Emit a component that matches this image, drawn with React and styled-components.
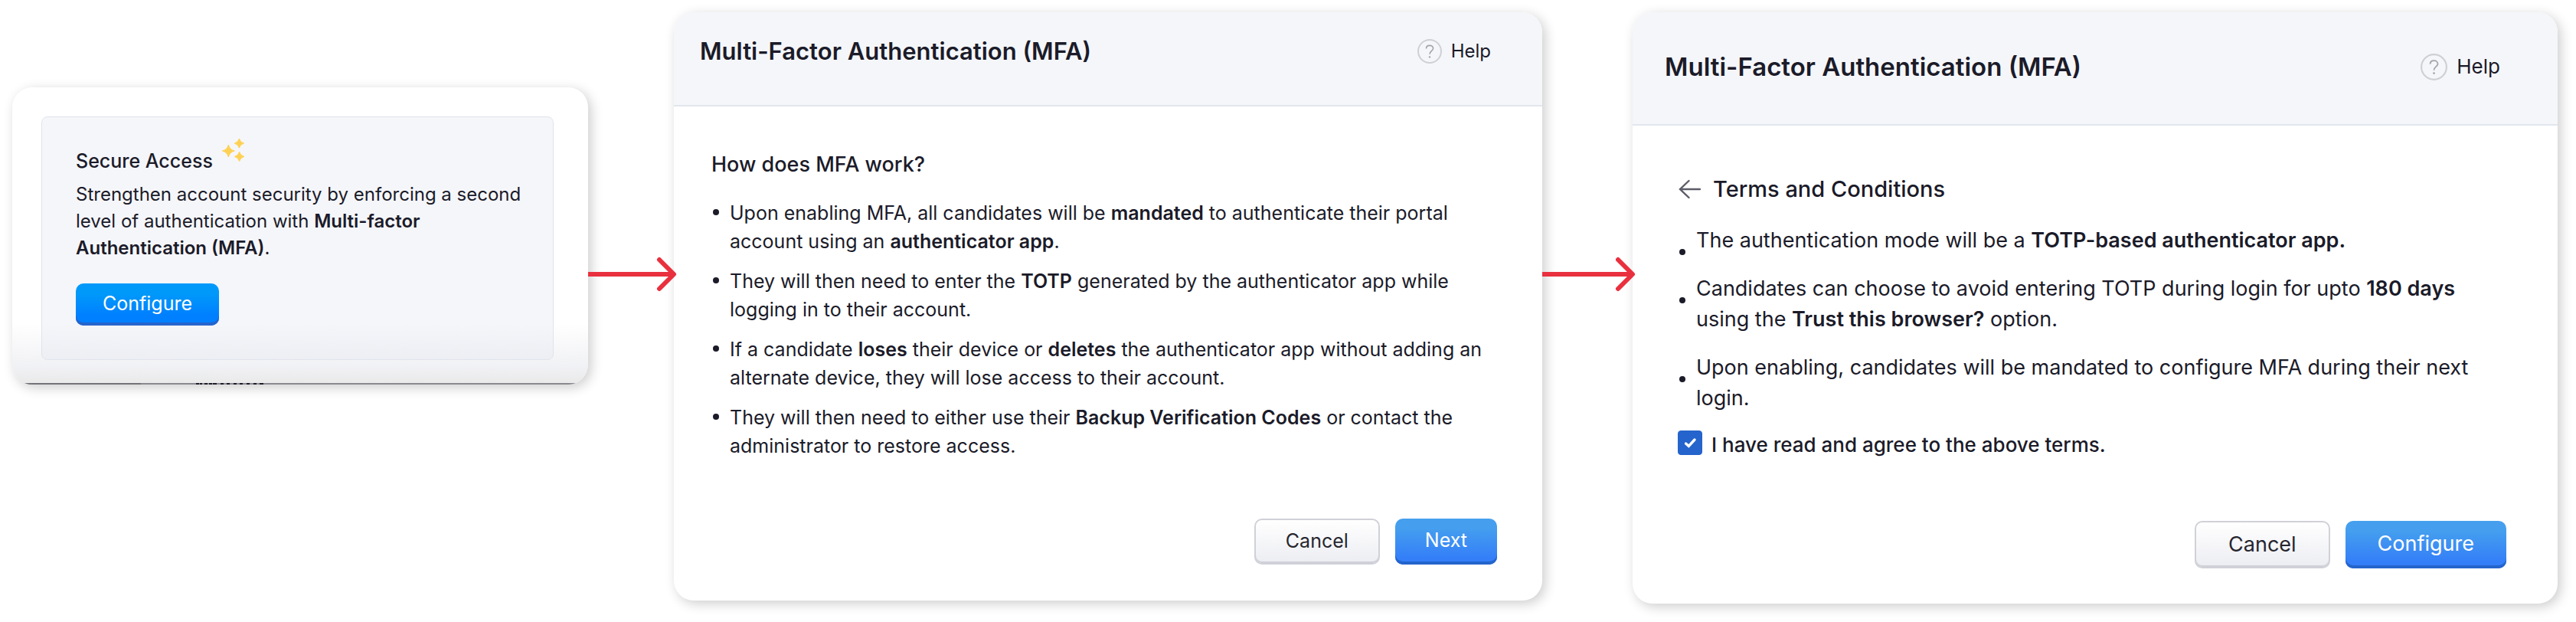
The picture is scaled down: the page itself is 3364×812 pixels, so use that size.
import React, { useState } from 'react';
import styled, { createGlobalStyle } from 'styled-components';

const GlobalStyle = createGlobalStyle`
	* {
		box-sizing: border-box;
	}
	body {
		margin: 0;
		background: #fff;
		color: #1b1b29;
		font-family: Inter, "Liberation Sans", sans-serif;
	}
	button, input {
		font-family: inherit;
	}
`;

const Flow = styled.main`
	display: grid;
	grid-template-columns: 752fr 112px 1134fr 118px 1208fr;
	align-items: start;
	padding: 16px 24px 24px 16px;
`;

const Panel = styled.section`
	border-radius: 26px;
	background: #fff;
	box-shadow: 4px 4px 16px rgba(0, 0, 0, 0.2);
	overflow: hidden;
`;

const IntroPanel = styled(Panel)`
	display: grid;
	margin-top: 98px;
`;

const IntroBody = styled.div`
	grid-area: 1 / 1;
	padding: 38px 45px 32px 38px;
`;

const IntroFade = styled.div`
	grid-area: 1 / 1;
	align-self: end;
	height: 80px;
	background: linear-gradient(rgba(255, 255, 255, 0), rgba(226, 228, 234, 0.5) 70%, #e9e9e9);
	pointer-events: none;
	svg {
		display: block;
		width: 100%;
	}
`;

const IntroCard = styled.div`
	padding: 28px 30px 44px 44px;
	border: 1px solid #dfe3eb;
	border-radius: 8px;
	background: #f5f6fa;
`;

const IntroHead = styled.div`
	display: flex;
	align-items: flex-end;
	gap: 12px;
	height: 46px;
	svg {
		align-self: flex-start;
	}
`;

const IntroTitle = styled.h2`
	margin: 0;
	font-size: 25px;
	line-height: 34px;
	font-weight: 500;
`;

const IntroText = styled.p`
	margin: 9px 0 29px;
	font-size: 24px;
	line-height: 35px;
	b {
		font-weight: 600;
	}
`;

const Header = styled.header`
	display: flex;
	align-items: center;
	justify-content: space-between;
	padding: ${(props) => (props.$large ? '49px 75px 53px 42px' : '31px 67px 50px 34px')};
	border-bottom: 2px solid #e1e6ee;
	background: #f5f6fa;
`;

const Title = styled.h1`
	margin: 0;
	font-size: ${(props) => (props.$large ? 33 : 31)}px;
	line-height: ${(props) => (props.$large ? 44 : 40)}px;
	font-weight: 600;
`;

const HelpLink = styled.a`
	display: flex;
	align-items: center;
	gap: 12px;
	color: #1b1b29;
	font-size: ${(props) => (props.$large ? 26 : 24)}px;
	line-height: 32px;
	text-decoration: none;
`;

const Body = styled.div`
	padding: ${(props) => (props.$large ? '63px 67px 46px 59px' : '58px 59px 47px 49px')};
`;

const Heading = styled.div`
	display: flex;
	align-items: center;
	gap: 16px;
	margin-bottom: 27px;
	h2 {
		margin: 0;
		font-size: ${(props) => (props.$large ? 29 : 27)}px;
		line-height: ${(props) => (props.$large ? 40 : 36)}px;
		font-weight: 500;
	}
`;

const BackButton = styled.button`
	display: flex;
	padding: 0;
	border: 0;
	background: none;
	cursor: pointer;
`;

const List = styled.ul`
	display: flex;
	flex-direction: column;
	gap: ${(props) => (props.$large ? 23 : 15)}px;
	margin: 0;
	padding: ${(props) => (props.$large ? '0 24px 0 2px' : '0 0 0 2px')};
	font-size: ${(props) => (props.$large ? 27 : 25)}px;
	line-height: ${(props) => (props.$large ? 40 : 37)}px;
	list-style: none;
	b {
		font-weight: 600;
	}
`;

const Item = styled.li`
	display: flex;
	align-items: flex-start;
	gap: 14px;
	&::before {
		content: '';
		flex: none;
		width: 8px;
		height: 8px;
		margin-top: ${(props) => (props.$lowDot ? 31 : 13)}px;
		border-radius: 50%;
		background: #1b1b29;
	}
`;

const Agree = styled.label`
	display: flex;
	align-items: flex-start;
	gap: 12px;
	margin-top: 22px;
	font-size: 26px;
	line-height: 38px;
	font-weight: 500;
	cursor: pointer;
`;

const CheckWrap = styled.span`
	display: grid;
	width: 32px;
	height: 32px;
	svg {
		grid-area: 1 / 1;
		pointer-events: none;
	}
`;

const Checkbox = styled.input`
	grid-area: 1 / 1;
	appearance: none;
	width: 32px;
	height: 32px;
	margin: 0;
	border: 1px solid #2464cc;
	border-radius: 4px;
	background: #fff;
	&:checked {
		background: #2464cc;
	}
`;

const Actions = styled.div`
	display: flex;
	justify-content: flex-end;
	gap: 20px;
	margin-top: ${(props) => (props.$large ? 80 : 76)}px;
`;

const Button = styled.button`
	height: ${(props) => (props.$large ? 62 : 60)}px;
	padding: 0 ${(props) => (props.$large ? 42 : 39)}px 4px;
	border: 0;
	border-radius: 10px;
	background: linear-gradient(#459fee 20%, #347ff8 85%);
	box-shadow: inset 0 -4px #2464cc;
	color: #fff;
	font-size: ${(props) => (props.$large ? 27 : 25)}px;
	cursor: pointer;
`;

const CancelButton = styled(Button)`
	padding-bottom: 2px;
	border: 2px solid #d0d1d8;
	background: linear-gradient(#fff, #ecedf2);
	box-shadow: inset 0 -2px #d0d1d8;
	color: #26262f;
`;

const IntroButton = styled(Button)`
	height: 55px;
	padding: 0 35px 4px;
	background: linear-gradient(#0099fa 25%, #0080ff 75%);
`;

const ArrowSvg = styled.svg`
	display: block;
	position: relative;
	z-index: 1;
	width: calc(100% + 4px);
	height: 46px;
	margin-top: 319px;
`;

function FlowArrow() {
	return (
		<ArrowSvg viewBox="0 0 122 46" preserveAspectRatio="xMaxYMid slice" fill="none" stroke="#e9303e" strokeWidth="6" aria-hidden="true">
			<path d="M0 23H117" />
			<path d="M99 4L118 23L99 42" strokeLinecap="round" strokeLinejoin="round" />
		</ArrowSvg>
	);
}

function Sparkles() {
	return (
		<svg width="30" height="31" viewBox="0 0 30 31" fill="#fed154" stroke="#fed154" aria-hidden="true">
			<path d="M8.3 8Q9.8 14.5 16.3 16Q9.8 17.5 8.3 24Q6.8 17.5 .3 16Q6.8 14.5 8.3 8Z" />
			<path d="M22.4 0Q23.6 4.8 28.6 6.1Q23.6 7.4 22.4 12.2Q21.2 7.4 16.2 6.1Q21.2 4.8 22.4 0Z" />
			<path d="M22.6 17.3Q23.8 22.1 28.8 23.4Q23.8 24.7 22.6 29.5Q21.4 24.7 16.4 23.4Q21.4 22.1 22.6 17.3Z" />
		</svg>
	);
}

function Help({ large }) {
	const size = large ? 35 : 32;
	return (
		<HelpLink href="#help" $large={large}>
			<svg width={size} height={size} viewBox="0 0 32 32" fill="none" aria-hidden="true">
				<circle cx="16" cy="16" r="15" stroke="#cfd0d3" strokeWidth="2" />
				<path d="M11.5 12.6C11.5 9.8 13.4 8.4 16 8.4S20.6 10 20.6 12.3C20.6 15.3 16 15.8 16 19.8" stroke="#a2a3a8" strokeWidth="1.6" />
				<circle cx="16" cy="23.4" r="1.2" fill="#a2a3a8" />
			</svg>
			Help
		</HelpLink>
	);
}

// top edge of the row that the intro card covers
function CoveredRow() {
	return (
		<svg height="80" fill="none" strokeWidth="2" aria-hidden="true">
			<line x1="0" y1="79" x2="100%" y2="79" stroke="#8b8990" />
			<path d="M0 79H168" stroke="#747278" />
			<path
				d="M240 79H244M245 79H248M251 79H255M257 79H261M262 79H267M272 79H276M280 79H284M289 79H293M297 79H301M306 79H310M315 79H319M323 79H328"
				stroke="#1e1d2b"
			/>
		</svg>
	);
}

function App() {
	const [agreed, setAgreed] = useState(true);

	return (
		<>
			<GlobalStyle />
			<Flow>
				<IntroPanel>
					<IntroBody>
						<IntroCard>
							<IntroHead>
								<IntroTitle>Secure Access</IntroTitle>
								<Sparkles />
							</IntroHead>
							<IntroText>
								Strengthen account security by enforcing a second level of authentication with{' '}
								<b>Multi-factor Authentication (MFA)</b>.
							</IntroText>
							<IntroButton>Configure</IntroButton>
						</IntroCard>
					</IntroBody>
					<IntroFade>
						<CoveredRow />
					</IntroFade>
				</IntroPanel>

				<FlowArrow />

				<Panel>
					<Header>
						<Title>Multi-Factor Authentication (MFA)</Title>
						<Help />
					</Header>
					<Body>
						<Heading>
							<h2>How does MFA work?</h2>
						</Heading>
						<List>
							<Item>
								<span>
									Upon enabling MFA, all candidates will be <b>mandated</b> to authenticate their portal account using an{' '}
									<b>authenticator app</b>.
								</span>
							</Item>
							<Item>
								<span>
									They will then need to enter the <b>TOTP</b> generated by the authenticator app while logging in to their
									account.
								</span>
							</Item>
							<Item>
								<span>
									If a candidate <b>loses</b> their device or <b>deletes</b> the authenticator app without adding an
									alternate device, they will lose access to their account.
								</span>
							</Item>
							<Item>
								<span>
									They will then need to either use their <b>Backup Verification Codes</b> or contact the administrator to
									restore access.
								</span>
							</Item>
						</List>
						<Actions>
							<CancelButton>Cancel</CancelButton>
							<Button>Next</Button>
						</Actions>
					</Body>
				</Panel>

				<FlowArrow />

				<Panel>
					<Header $large>
						<Title $large>Multi-Factor Authentication (MFA)</Title>
						<Help large />
					</Header>
					<Body $large>
						<Heading $large>
							<BackButton aria-label="Back">
								<svg width="30" height="28" viewBox="0 0 30 28" fill="none" stroke="#5c5d68" strokeWidth="2.4" strokeLinecap="round">
									<path d="M3 14H29M14.5 3L3 14L14.5 25" />
								</svg>
							</BackButton>
							<h2>Terms and Conditions</h2>
						</Heading>
						<List $large>
							<Item $lowDot>
								<span>
									The authentication mode will be a <b>TOTP-based authenticator app.</b>
								</span>
							</Item>
							<Item $lowDot>
								<span>
									Candidates can choose to avoid entering TOTP during login for upto <b>180 days</b> using the{' '}
									<b>Trust this browser?</b> option.
								</span>
							</Item>
							<Item $lowDot>
								<span>Upon enabling, candidates will be mandated to configure MFA during their next login.</span>
							</Item>
						</List>
						<Agree>
							<CheckWrap>
								<Checkbox type="checkbox" checked={agreed} onChange={(e) => setAgreed(e.target.checked)} />
								{agreed && (
									<svg width="32" height="32" viewBox="0 0 32 32" fill="none" stroke="#fff" strokeWidth="3.4" strokeLinecap="round">
										<path d="M10.5 17L14.3 20.3L22 12" />
									</svg>
								)}
							</CheckWrap>
							I have read and agree to the above terms.
						</Agree>
						<Actions $large>
							<CancelButton $large>Cancel</CancelButton>
							<Button $large>Configure</Button>
						</Actions>
					</Body>
				</Panel>
			</Flow>
		</>
	);
}

export default App;
